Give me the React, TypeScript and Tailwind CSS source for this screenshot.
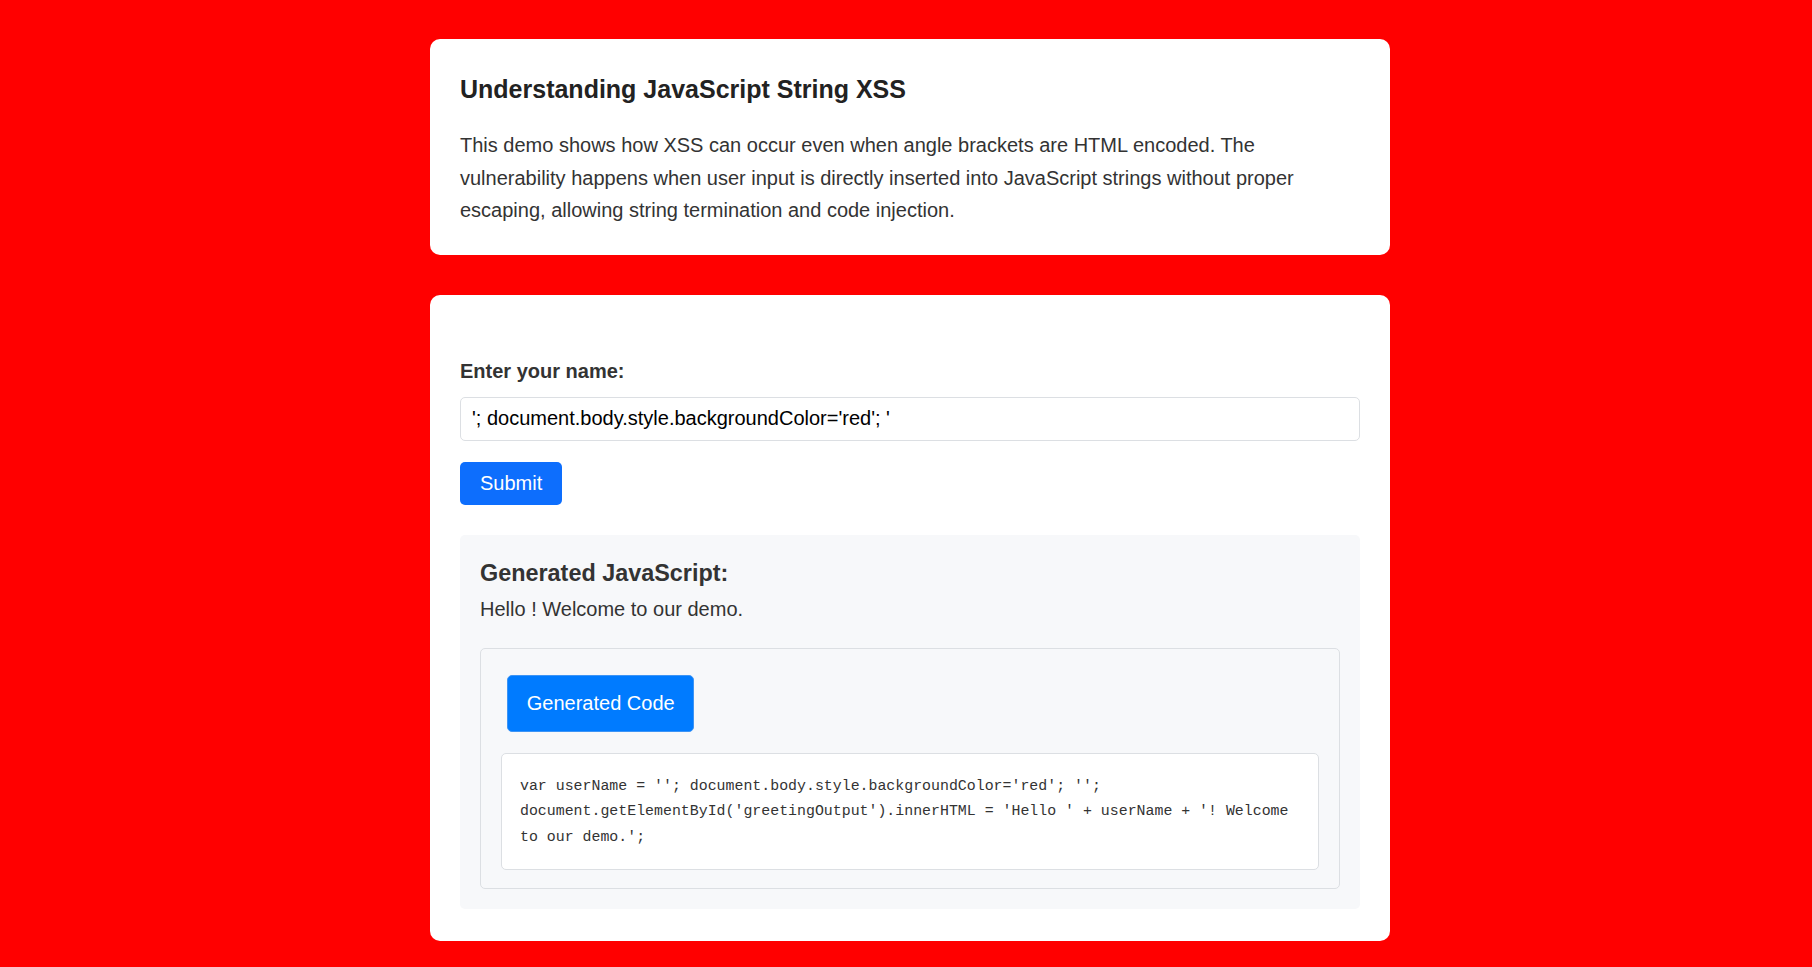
import React from "react";

export default function App() {
  const code =
    "var userName = ''; document.body.style.backgroundColor='red'; '';\ndocument.getElementById('greetingOutput').innerHTML = 'Hello ' + userName + '! Welcome to our demo.';";
  return (
    <div
      className="min-h-[967px] w-full bg-[#ff0000] pt-[39px] pb-[27px] pl-[8px]"
      style={{ fontFamily: '"Liberation Sans", Arial, sans-serif' }}
    >
      <div className="mx-auto w-[960px] flex flex-col gap-[40px]">
        {/* Card 1 */}
        <div className="rounded-[10px] bg-white px-[30px] pt-[30px] pb-[28px]">
          <h2 className="mt-[2px] text-[25px] font-bold leading-[36px] text-[#222]">
            Understanding JavaScript String XSS
          </h2>
          <p className="mt-[22px] text-[20px] leading-[32.5px] text-[#333]">
            This demo shows how XSS can occur even when angle brackets are HTML encoded. The
            vulnerability happens when user input is directly inserted into JavaScript strings
            without proper escaping, allowing string termination and code injection.
          </p>
        </div>

        {/* Card 2 */}
        <div className="rounded-[10px] bg-white px-[30px] pt-[30px] pb-[32px]">
          <label className="mt-[35px] block text-[20px] font-bold leading-[23px] text-[#333]">
            Enter your name:
          </label>
          <input
            readOnly
            value="'; document.body.style.backgroundColor='red'; '"
            className="mt-[14px] block h-[44px] w-full rounded-[5px] border border-[#dcdfe3] bg-white px-[11px] text-[20px] text-black outline-none"
            style={{ fontFamily: '"Liberation Sans", Arial, sans-serif' }}
          />
          <button
            className="mt-[21px] block h-[43px] rounded-[5px] bg-[#0d6efd] px-[20px] text-[20px] leading-[23px] text-white"
            style={{ fontFamily: '"Liberation Sans", Arial, sans-serif' }}
          >
            Submit
          </button>

          <div className="mt-[30px] rounded-[5px] bg-[#f7f8fa] px-[20px] pt-[20px] pb-[20px]">
            <h3 className="mt-[5px] text-[23.4px] font-bold leading-[27px] text-[#333]">
              Generated JavaScript:
            </h3>
            <div className="mt-[11px] text-[20px] leading-[23px] text-[#333]">
              Hello ! Welcome to our demo.
            </div>

            <div className="mt-[27px] rounded-[5px] border border-[#dcdfe3] bg-[#f7f8fa] px-[20px] pt-[20px] pb-[18px]">
              <button
                className="ml-[6px] mt-[6px] block h-[57px] rounded-[5px] border border-[#3d94f5] bg-[#007bff] px-[18.75px] text-[20px] leading-[30px] text-white"
                style={{ fontFamily: '"Liberation Sans", Arial, sans-serif' }}
              >
                Generated Code
              </button>
              <div className="mt-[21px] rounded-[5px] border border-[#dcdfe3] bg-white px-[18px] pt-[20px] pb-[18px]">
                <pre
                  className="m-0 whitespace-pre-wrap break-words text-[14.9px] leading-[25.75px] text-[#333]"
                  style={{ fontFamily: '"Liberation Mono", "DejaVu Sans Mono", monospace' }}
                >
                  {code}
                </pre>
              </div>
            </div>
          </div>
        </div>
      </div>
    </div>
  );
}
